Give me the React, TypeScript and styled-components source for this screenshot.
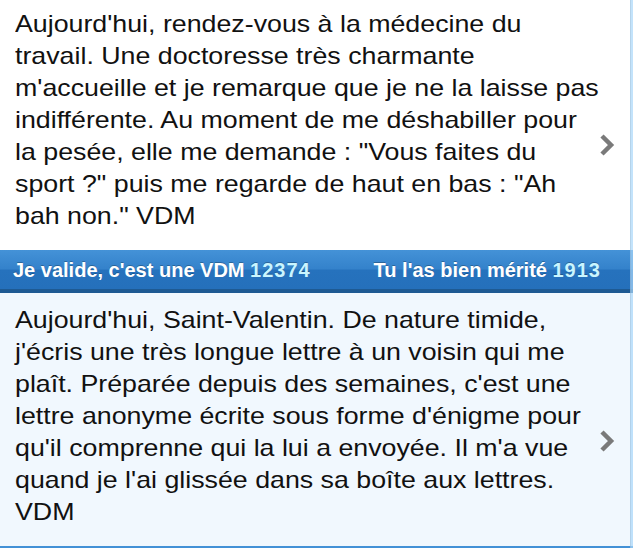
import styled, { createGlobalStyle } from "styled-components";

const GlobalStyle = createGlobalStyle`
  html, body {
    margin: 0;
    padding: 0;
    background: #ffffff;
    overflow: hidden;
  }
  body {
    font-family: "Liberation Sans", Arial, Helvetica, sans-serif;
  }
`;

interface Story {
  lines: string[];
  validate: number;
  deserved: number;
}

const stories: Story[] = [
  {
    lines: [
      "Aujourd'hui, rendez-vous à la médecine du",
      "travail. Une doctoresse très charmante",
      "m'accueille et je remarque que je ne la laisse pas",
      "indifférente. Au moment de me déshabiller pour",
      "la pesée, elle me demande : \"Vous faites du",
      "sport ?\" puis me regarde de haut en bas : \"Ah",
      "bah non.\" VDM",
    ],
    validate: 12374,
    deserved: 1913,
  },
  {
    lines: [
      "Aujourd'hui, Saint-Valentin. De nature timide,",
      "j'écris une très longue lettre à un voisin qui me",
      "plaît. Préparée depuis des semaines, c'est une",
      "lettre anonyme écrite sous forme d'énigme pour",
      "qu'il comprenne qui la lui a envoyée. Il m'a vue",
      "quand je l'ai glissée dans sa boîte aux lettres.",
      "VDM",
    ],
    validate: 8421,
    deserved: 655,
  },
];

const App = () => {
  return (
    <>
      <GlobalStyle />
      <Screen>
        <List>
          {stories.map((story, i) => (
            <Cell key={i} $alt={i % 2 === 1}>
              <Body>
                {story.lines.map((line, j) => (
                  <span key={j}>
                    {line}
                    <br />
                  </span>
                ))}
              </Body>
              <Bar>
                <BarItem>
                  Je valide, c'est une VDM <Count>{story.validate}</Count>
                </BarItem>
                <BarItem>
                  Tu l'as bien mérité <Count>{story.deserved}</Count>
                </BarItem>
              </Bar>
              <Chevron viewBox="0 0 16 24">
                <polyline points="3,3 12,12 3,21" />
              </Chevron>
            </Cell>
          ))}
        </List>
        <Edge />
      </Screen>
    </>
  );
};

export default App;

const Screen = styled.div`
  width: 633px;
  height: 548px;
  overflow: hidden;
  position: relative;
`;

/* scrolled a little */
const List = styled.div`
  display: flex;
  flex-direction: column;
  margin-top: -3px;
`;

const Cell = styled.div<{ $alt?: boolean }>`
  position: relative;
  display: flex;
  flex-direction: column;
  background: ${({ $alt }) => ($alt ? "#f1f8fe" : "#ffffff")};
`;

/* the device font is a bit wider than Liberation Sans */
const Body = styled.p`
  margin: 0;
  padding: 11px 20px 18px 15px;
  font-size: 24px;
  line-height: 32px;
  color: #111111;
  white-space: nowrap;
  transform: scaleX(1.115);
  transform-origin: 15px 0;
`;

const Bar = styled.div`
  display: flex;
  align-items: center;
  justify-content: space-between;
  height: 39px;
  padding: 0 32px 0 13px;
  background: linear-gradient(
    to bottom,
    #4492d7 0%,
    #3482cb 48%,
    #2672bd 52%,
    #2570bb 100%
  );
  border-bottom: 4px solid #1e5a93;
`;

const BarItem = styled.span`
  font-size: 20px;
  font-weight: bold;
  color: #ffffff;
  text-shadow: 0 -1px 0 rgba(0, 0, 0, 0.25);
  padding-top: 2px;
`;

const Count = styled.span`
  font-size: 20px;
  letter-spacing: 1px;
  color: #c9f5ff;
`;

const Chevron = styled.svg`
  position: absolute;
  right: 18px;
  top: 50%;
  width: 16px;
  height: 24px;
  margin-top: -12px;
  fill: none;
  stroke: #7a7a7a;
  stroke-width: 4.5;
  stroke-linecap: butt;
  stroke-linejoin: miter;
`;

/* scroll edge over the right side */
const Edge = styled.div`
  position: absolute;
  top: 0;
  right: 0;
  bottom: 0;
  width: 2px;
  border-left: 1px solid rgba(120, 140, 160, 0.18);
  background: rgba(170, 215, 250, 0.7);
`;
